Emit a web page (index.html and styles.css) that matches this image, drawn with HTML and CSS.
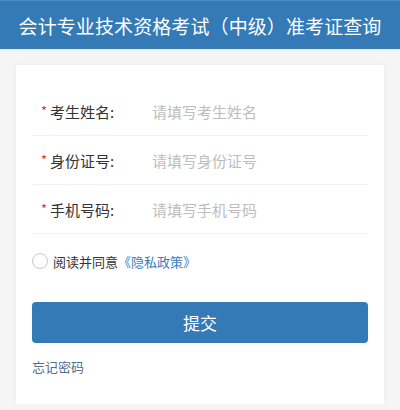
FILE: index.html
```html
<!DOCTYPE html>
<html lang="zh-CN">
<head>
<meta charset="utf-8">
<link rel="stylesheet" href="styles.css">
</head>
<body>
<header class="topbar">
  <h1 class="title">会计专业技术资格考试（中级）准考证查询</h1>
</header>
<main class="page">
  <section class="card">
    <div class="field">
      <label class="label"><span class="star">*</span>考生姓名:</label>
      <input class="input" type="text" placeholder="请填写考生姓名">
    </div>
    <div class="field">
      <label class="label"><span class="star">*</span>身份证号:</label>
      <input class="input" type="text" placeholder="请填写身份证号">
    </div>
    <div class="field">
      <label class="label"><span class="star">*</span>手机号码:</label>
      <input class="input" type="text" placeholder="请填写手机号码">
    </div>
    <div class="agree">
      <span class="radio"></span>
      <span class="agree-text">阅读并同意</span><a class="link" href="#">《隐私政策》</a>
    </div>
    <button class="submit" type="button">提交</button>
    <a class="forgot" href="#">忘记密码</a>
  </section>
</main>
</body>
</html>
```

FILE: styles.css
```css
* { box-sizing: border-box; }
html, body {
  margin: 0;
  padding: 0;
  background: #f5f5f5;
  font-family: "Noto Sans CJK SC", "Noto Sans", sans-serif;
}
.topbar {
  height: 49px;
  background: #337ab7;
  border-top: 1px solid #4f8cc2;
  box-shadow: 0 1px 2px rgba(0,0,0,0.06);
  display: flex;
  align-items: center;
  justify-content: center;
}
.title {
  margin: 0;
  color: #fff;
  font-size: 19px;
  font-weight: 400;
  line-height: 1;
  white-space: nowrap;
  letter-spacing: 0.1px;
}
.page {
  padding: 16px 16px 0;
}
.card {
  background: #fff;
  padding: 22px 16px 28px;
  box-shadow: 0 0 4px rgba(0,0,0,0.05);
  display: flex;
  flex-direction: column;
}
.field {
  height: 49px;
  border-bottom: 1px solid #f1f1f1;
  display: flex;
  align-items: center;
  padding-left: 9px;
}
.label {
  width: 111px;
  flex: none;
  font-size: 15px;
  color: #333;
  display: flex;
  align-items: center;
}
.star {
  color: #d9363e;
  font-size: 13px;
  width: 9px;
  margin-top: -2px;
}
.input {
  flex: 1;
  min-width: 0;
  border: 0;
  outline: 0;
  padding: 0;
  font-family: inherit;
  font-size: 15px;
  color: #333;
  background: transparent;
}
.input::placeholder {
  color: #bdbdbd;
}
.agree {
  margin-top: 17px;
  height: 20px;
  display: flex;
  align-items: center;
  font-size: 13px;
}
.radio {
  width: 16px;
  height: 16px;
  border: 1px solid #c8c8c8;
  border-radius: 50%;
  margin-right: 5px;
  flex: none;
}
.agree-text {
  color: #333;
}
.link {
  color: #3b7cc0;
  text-decoration: none;
}
.submit {
  margin-top: 31px;
  height: 41px;
  border: 0;
  border-radius: 4px;
  background: #337ab7;
  color: #fff;
  font-family: inherit;
  font-size: 17px;
  padding: 0;
}
.forgot {
  margin-top: 15px;
  font-size: 13px;
  line-height: 18px;
  color: #4f6f8f;
  text-decoration: none;
  align-self: flex-start;
}
```
